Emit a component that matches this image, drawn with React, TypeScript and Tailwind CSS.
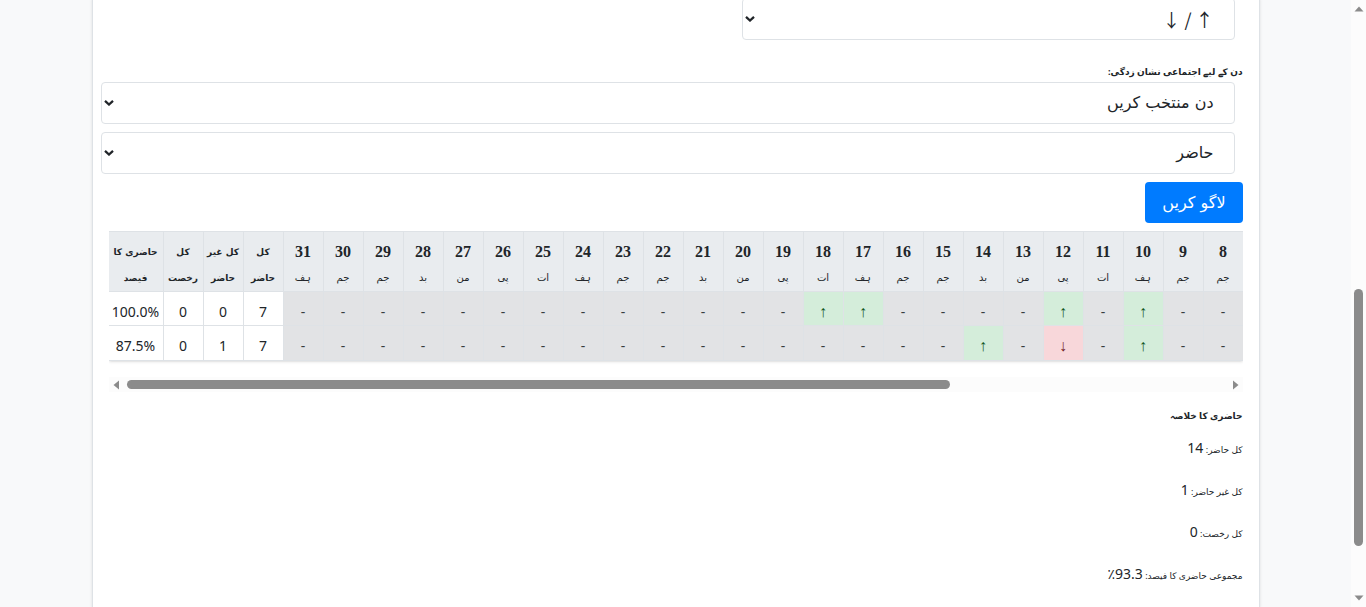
import type { ReactNode } from "react";

const weekdays = ["ہف", "ات", "پی", "من", "بد", "جم", "جم"];
const days = Array.from({ length: 24 }, (_, i) => i + 8);
const weekdayOf = (day: number) => weekdays[(day + 4) % 7];

type Mark = "up" | "down";
type Row = {
  marks: Record<number, Mark>;
  present: string;
  absent: string;
  leave: string;
  percent: string;
};

const rows: Row[] = [
  { marks: { 10: "up", 12: "up", 17: "up", 18: "up" }, present: "7", absent: "0", leave: "0", percent: "100.0%" },
  { marks: { 10: "up", 12: "down", 14: "up" }, present: "7", absent: "1", leave: "0", percent: "87.5%" },
];

const summary = [
  { label: "کل حاضر:", value: "14" },
  { label: "کل غیر حاضر:", value: "1" },
  { label: "کل رخصت:", value: "0" },
  { label: "مجموعی حاضری کا فیصد:", value: "93.3٪" },
];

function SelectBox({ id, label, font, children }: { id: string; label?: string; font: string; children: ReactNode }) {
  return (
    <div className="relative">
      <select
        id={id}
        aria-label={label}
        className={`block h-[42px] w-full appearance-none rounded border border-[#dee2e6] bg-white pr-5 pl-6 text-[#212529] ${font}`}
      >
        {children}
      </select>
      <svg viewBox="0 0 10 6" className="pointer-events-none absolute top-[18px] left-[3px] h-1.5 w-2.5" fill="none" stroke="#212529" strokeWidth="2.3">
        <path d="M1 0.9 L5 4.5 L9 0.9" />
      </svg>
    </div>
  );
}

const urduFont = "font-['DejaVu_Sans',sans-serif] text-base";
const arrowFont = "font-['Noto_Sans_CJK_JP',sans-serif] text-lg";
const cell = "border-t border-l border-[#dee2e6] last:border-l-0";

function DayCell({ mark }: { mark?: Mark }) {
  const base = `${cell} pt-1.5 text-center`;
  if (mark === "up") return <td className={`${base} bg-[#d4edda] font-['Liberation_Serif',serif] text-base leading-5 text-[#155724]`}>↑</td>;
  if (mark === "down") return <td className={`${base} bg-[#f8d7da] font-['Liberation_Serif',serif] text-base leading-5 text-[#721c24]`}>↓</td>;
  return <td className={`${base} bg-[#e2e3e5] text-[#383d41]`}>-</td>;
}

function TotalHead({ top, bottom }: { top: string; bottom: string }) {
  return (
    <th className={`${cell} pt-1.5 font-['DejaVu_Sans',sans-serif] text-[9px] leading-[26px] font-bold whitespace-nowrap`}>
      {top}
      <br />
      {bottom}
    </th>
  );
}

function TotalCell({ children }: { children: ReactNode }) {
  return <td className={`${cell} bg-white pt-1.5 text-center`}>{children}</td>;
}

export default function App() {
  return (
    <div className="flex min-h-screen bg-[#f8f9fa] font-['Noto_Sans','DejaVu_Sans',sans-serif] text-[#212529]">
      <div className="flex min-w-0 flex-1 justify-center overflow-hidden">
        <main dir="rtl" className="-mt-0.5 w-full max-w-[1168px] border-x border-[#dee2e6] bg-white px-4 shadow-sm">
          <div className="mr-2 w-[493px] max-w-full">
            <SelectBox id="symbols" label="علامات" font={arrowFont}>
              <option>↑ / ↓</option>
            </SelectBox>
          </div>

          <label htmlFor="day" className="mt-5 block h-[22px] text-[9px] leading-6 font-bold">
            دن کے لیے اجتماعی نشان زدگی:
          </label>
          <div className="mr-2 -ml-2 flex flex-col gap-2">
            <SelectBox id="day" font={urduFont}>
              <option>دن منتخب کریں</option>
            </SelectBox>
            <SelectBox id="status" label="حاضری" font={urduFont}>
              <option>حاضر</option>
            </SelectBox>
          </div>
          <button type="button" className="mt-2 block h-[41px] rounded bg-[#007bff] px-[17px] font-['DejaVu_Sans',sans-serif] text-base text-white">
            لاگو کریں
          </button>

          <div className="mt-2 overflow-hidden pb-4">
            <table className="w-full table-fixed border-separate border-spacing-0 border-b border-[#dee2e6] text-sm shadow-sm">
              <colgroup>
                {days.map((d) => (
                  <col key={d} />
                ))}
                <col />
                <col />
                <col />
                <col className="w-[54px]" />
              </colgroup>
              <thead>
                <tr className="h-[60px] bg-[#e9ecef]">
                  {days.map((d) => (
                    <th key={d} className={`${cell} pt-1.5 font-['Liberation_Serif',serif] text-base leading-[26px] font-bold`}>
                      {d}
                      <span className="block font-['DejaVu_Sans',sans-serif] text-[10px] leading-[26px] font-normal">{weekdayOf(d)}</span>
                    </th>
                  ))}
                  <TotalHead top="کل" bottom="حاضر" />
                  <TotalHead top="کل غیر" bottom="حاضر" />
                  <TotalHead top="کل" bottom="رخصت" />
                  <TotalHead top="حاضری کا" bottom="فیصد" />
                </tr>
              </thead>
              <tbody>
                {rows.map((row, i) => (
                  <tr key={i} className="h-[34px] last:h-[35px]">
                    {days.map((d) => (
                      <DayCell key={d} mark={row.marks[d]} />
                    ))}
                    <TotalCell>{row.present}</TotalCell>
                    <TotalCell>{row.absent}</TotalCell>
                    <TotalCell>{row.leave}</TotalCell>
                    <TotalCell>{row.percent}</TotalCell>
                  </tr>
                ))}
              </tbody>
            </table>
          </div>

          <div dir="ltr" className="flex h-[15px] items-center bg-[#fcfcfc] px-1">
            <svg viewBox="0 0 6 10" className="h-2.5 w-1.5" fill="#8b8b8b">
              <path d="M6 0.5v9L0.5 5z" />
            </svg>
            <div className="mx-2 flex-1">
              <div className="h-[9px] w-3/4 rounded-full bg-[#8b8b8b]" />
            </div>
            <svg viewBox="0 0 6 10" className="h-2.5 w-1.5" fill="#8b8b8b">
              <path d="M0 0.5v9L5.5 5z" />
            </svg>
          </div>

          <section className="pt-3">
            <h2 className="text-[9px] leading-6 font-bold">حاضری کا خلاصہ</h2>
            <div className="mt-2 flex flex-col gap-[18px] text-[9px] leading-6">
              {summary.map((s) => (
                <p key={s.label} className="h-6">
                  {s.label} <span className="text-sm leading-6">{s.value}</span>
                </p>
              ))}
            </div>
          </section>
        </main>
      </div>

      <div className="flex w-[15px] flex-col items-center bg-[#fcfcfc] py-1.5">
        <svg viewBox="0 0 10 6" className="h-1.5 w-2.5" fill="#8b8b8b">
          <path d="M0.5 5.5h9L5 0.5z" />
        </svg>
        <div className="flex w-full flex-1 flex-col items-center">
          <div className="grow-[277]" />
          <div className="w-[9px] grow-[257] rounded-full bg-[#8b8b8b]" />
          <div className="grow-[49]" />
        </div>
        <svg viewBox="0 0 10 6" className="h-1.5 w-2.5" fill="#8b8b8b">
          <path d="M0.5 0.5h9L5 5.5z" />
        </svg>
      </div>
    </div>
  );
}
